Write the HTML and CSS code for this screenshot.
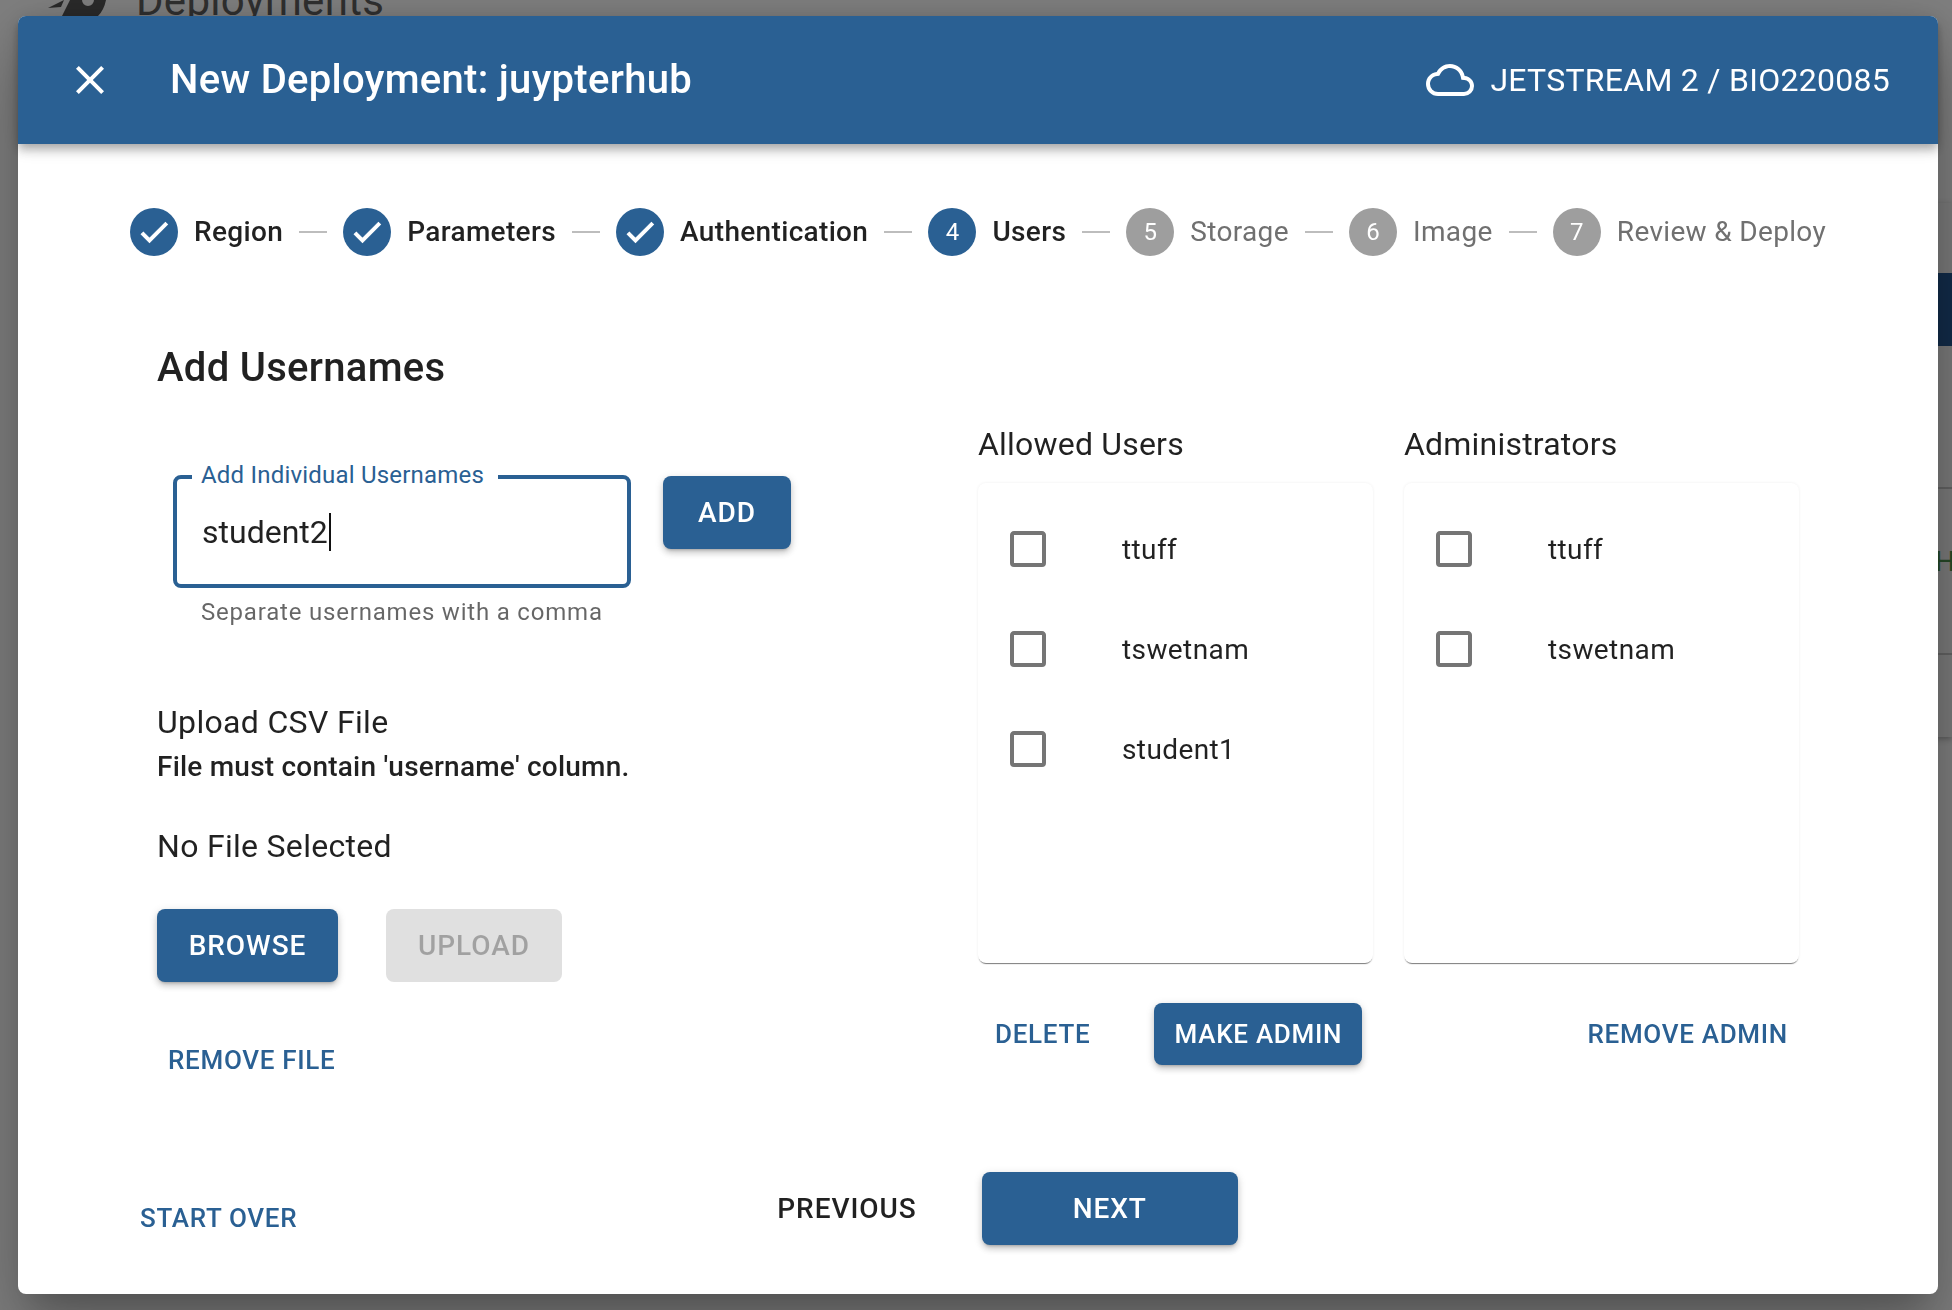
FILE: index.html
```html
<!DOCTYPE html>
<html lang="en">
<head>
    <meta charset="UTF-8">
    <meta name="viewport" content="width=device-width, initial-scale=1.0">
    <title>New Deployment</title>
    <link rel="stylesheet" href="styles.css">
</head>
<body>
    <div class="backdrop">
        <svg class="page-logo" viewBox="0 0 60 16"><path d="M0 8 16 0 13 7Z M14 16 22 0H34A6 6 0 0 0 46 0H58Q56 10 50 16Z"/></svg>
        <div class="page-title">Deployments</div>
        <div class="page-panel">
            <div class="panel-head"></div>
            <div class="panel-line panel-line-a"></div>
            <div class="panel-letter">H</div>
            <div class="panel-line panel-line-b"></div>
        </div>
    </div>

    <div class="dialog">
        <header class="toolbar">
            <svg class="close-icon" viewBox="0 0 24 24"><path d="M19 6.41 17.59 5 12 10.59 6.41 5 5 6.41 10.59 12 5 17.59 6.41 19 12 13.41 17.59 19 19 17.59 13.41 12z"/></svg>
            <div class="toolbar-title">New Deployment: juypterhub</div>
            <div class="toolbar-cloud">
                <svg class="cloud-icon" viewBox="0 0 24 24"><path d="M19.35 10.03C18.67 6.59 15.64 4 12 4 9.11 4 6.6 5.64 5.35 8.03 2.34 8.36 0 10.9 0 14A6 6 0 0 0 6 20H19A5 5 0 0 0 24 15C24 12.36 21.95 10.22 19.35 10.03M19 18H6A4 4 0 0 1 2 14C2 11.95 3.53 10.24 5.56 10.03L6.63 9.92 7.13 8.97C8.08 7.14 9.94 6 12 6 14.62 6 16.88 7.86 17.39 10.43L17.69 11.93 19.22 12.04C20.78 12.14 22 13.45 22 15A3 3 0 0 1 19 18Z"/></svg>
                <span>JETSTREAM 2 / BIO220085</span>
            </div>
        </header>

        <nav class="stepper">
            <div class="step">
                <span class="step-badge"><svg viewBox="0 0 24 24"><path d="M21 7 9 19 3.5 13.5 4.91 12.09 9 16.17 19.59 5.59 21 7Z"/></svg></span>
                <span class="step-label">Region</span>
            </div>
            <div class="step-line"></div>
            <div class="step">
                <span class="step-badge"><svg viewBox="0 0 24 24"><path d="M21 7 9 19 3.5 13.5 4.91 12.09 9 16.17 19.59 5.59 21 7Z"/></svg></span>
                <span class="step-label">Parameters</span>
            </div>
            <div class="step-line"></div>
            <div class="step">
                <span class="step-badge"><svg viewBox="0 0 24 24"><path d="M21 7 9 19 3.5 13.5 4.91 12.09 9 16.17 19.59 5.59 21 7Z"/></svg></span>
                <span class="step-label">Authentication</span>
            </div>
            <div class="step-line"></div>
            <div class="step">
                <span class="step-badge">4</span>
                <span class="step-label">Users</span>
            </div>
            <div class="step-line"></div>
            <div class="step step-todo">
                <span class="step-badge">5</span>
                <span class="step-label">Storage</span>
            </div>
            <div class="step-line"></div>
            <div class="step step-todo">
                <span class="step-badge">6</span>
                <span class="step-label">Image</span>
            </div>
            <div class="step-line"></div>
            <div class="step step-todo">
                <span class="step-badge">7</span>
                <span class="step-label">Review &amp; Deploy</span>
            </div>
        </nav>

        <main class="content">
            <section class="left-col">
                <h2 class="section-title">Add Usernames</h2>

                <div class="add-row">
                    <div class="field">
                        <div class="field-box">
                            <span class="field-label">Add Individual Usernames</span>
                            <span class="field-value">student2</span><span class="caret"></span>
                        </div>
                        <div class="field-hint">Separate usernames with a comma</div>
                    </div>
                    <button type="button" class="btn btn-add">ADD</button>
                </div>

                <div class="upload-title">Upload CSV File</div>
                <div class="upload-note">File must contain 'username' column.</div>
                <div class="upload-file">No File Selected</div>

                <div class="upload-btns">
                    <button type="button" class="btn btn-browse">BROWSE</button>
                    <button type="button" class="btn btn-disabled">UPLOAD</button>
                </div>
                <button type="button" class="btn-text btn-small btn-remove-file">REMOVE FILE</button>
            </section>

            <section class="right-col">
                <div class="list-col">
                    <div class="list-title">Allowed Users</div>
                    <div class="list-card">
                        <div class="list-row">
                            <svg class="check" viewBox="0 0 24 24"><path d="M19 3H5C3.89 3 3 3.89 3 5V19A2 2 0 0 0 5 21H19A2 2 0 0 0 21 19V5C21 3.89 20.1 3 19 3M19 5V19H5V5H19Z"/></svg>
                            <span>ttuff</span>
                        </div>
                        <div class="list-row">
                            <svg class="check" viewBox="0 0 24 24"><path d="M19 3H5C3.89 3 3 3.89 3 5V19A2 2 0 0 0 5 21H19A2 2 0 0 0 21 19V5C21 3.89 20.1 3 19 3M19 5V19H5V5H19Z"/></svg>
                            <span>tswetnam</span>
                        </div>
                        <div class="list-row">
                            <svg class="check" viewBox="0 0 24 24"><path d="M19 3H5C3.89 3 3 3.89 3 5V19A2 2 0 0 0 5 21H19A2 2 0 0 0 21 19V5C21 3.89 20.1 3 19 3M19 5V19H5V5H19Z"/></svg>
                            <span>student1</span>
                        </div>
                    </div>
                    <div class="list-actions">
                        <button type="button" class="btn-text btn-small btn-delete">DELETE</button>
                        <button type="button" class="btn btn-small btn-make">MAKE ADMIN</button>
                    </div>
                </div>
                <div class="list-col">
                    <div class="list-title">Administrators</div>
                    <div class="list-card">
                        <div class="list-row">
                            <svg class="check" viewBox="0 0 24 24"><path d="M19 3H5C3.89 3 3 3.89 3 5V19A2 2 0 0 0 5 21H19A2 2 0 0 0 21 19V5C21 3.89 20.1 3 19 3M19 5V19H5V5H19Z"/></svg>
                            <span>ttuff</span>
                        </div>
                        <div class="list-row">
                            <svg class="check" viewBox="0 0 24 24"><path d="M19 3H5C3.89 3 3 3.89 3 5V19A2 2 0 0 0 5 21H19A2 2 0 0 0 21 19V5C21 3.89 20.1 3 19 3M19 5V19H5V5H19Z"/></svg>
                            <span>tswetnam</span>
                        </div>
                    </div>
                    <div class="list-actions list-actions-end">
                        <button type="button" class="btn-text btn-small btn-remove-admin">REMOVE ADMIN</button>
                    </div>
                </div>
            </section>
        </main>

        <footer class="footer">
            <button type="button" class="btn-text btn-small btn-start">START OVER</button>
            <button type="button" class="btn-text btn-previous">PREVIOUS</button>
            <button type="button" class="btn btn-next">NEXT</button>
        </footer>
    </div>
</body>
</html>
```

FILE: styles.css
```css
* {
    box-sizing: border-box;
}

html,
body {
    height: 100%;
}

body {
    margin: 0;
    padding: 16px 14px 16px 18px;
    overflow: hidden;
    background: #808080;
    color: rgba(0, 0, 0, 0.87);
    font-family: Roboto, sans-serif;
}

/* page behind the dialog */
.backdrop {
    position: fixed;
    inset: 0;
    overflow: hidden;
    background: #808080;
}

.page-logo {
    position: absolute;
    top: 0;
    left: 48px;
    width: 60px;
    height: 16px;
    fill: #2a2a2a;
}

.page-title {
    position: absolute;
    top: -23px;
    left: 136px;
    font-size: 42px;
    line-height: 48px;
    letter-spacing: 0.3px;
    color: #303030;
}

.page-panel {
    position: absolute;
    top: 203px;
    right: 0;
    width: 40px;
    height: 534px;
    background: #7c7c7c;
    box-shadow: 0 2px 6px rgba(0, 0, 0, 0.3);
}

.panel-head {
    position: absolute;
    top: 70px;
    left: 0;
    width: 100%;
    height: 73px;
    background: #122c4a;
}

.panel-line {
    position: absolute;
    left: 0;
    width: 100%;
    height: 2px;
    background: #646464;
}

.panel-line-a {
    top: 284px;
}

.panel-line-b {
    top: 450px;
}

.panel-letter {
    position: absolute;
    top: 343px;
    left: 23px;
    font-size: 28px;
    line-height: 32px;
    color: #274a27;
}

/* dialog */
.dialog {
    position: relative;
    width: 1920px;
    height: 1278px;
    background: #fff;
    border-radius: 8px;
    box-shadow: 0 22px 30px -14px rgba(0, 0, 0, 0.2), 0 48px 76px 6px rgba(0, 0, 0, 0.16), 0 18px 92px 16px rgba(0, 0, 0, 0.12);
}

.toolbar {
    display: flex;
    align-items: center;
    height: 128px;
    padding: 0 48px 0 48px;
    border-radius: 8px 8px 0 0;
    background: #2a6093;
    color: #fff;
    box-shadow: 0 4px 8px -2px rgba(0, 0, 0, 0.2), 0 8px 10px 0 rgba(0, 0, 0, 0.14), 0 2px 20px 0 rgba(0, 0, 0, 0.12);
}

.close-icon {
    width: 48px;
    height: 48px;
    fill: #fff;
}

.toolbar-title {
    margin-left: 56px;
    padding-bottom: 2px;
    font-size: 40px;
    font-weight: 500;
    letter-spacing: 0.3px;
}

.toolbar-cloud {
    display: flex;
    align-items: center;
    gap: 16px;
    margin-left: auto;
    font-size: 32px;
    letter-spacing: 0.27px;
}

.cloud-icon {
    width: 48px;
    height: 48px;
    fill: #fff;
}

/* stepper */
.stepper {
    display: flex;
    align-items: center;
    padding: 64px 112px 0;
}

.step {
    display: flex;
    align-items: center;
    gap: 16px;
}

.step-badge {
    display: flex;
    align-items: center;
    justify-content: center;
    width: 48px;
    height: 48px;
    border-radius: 50%;
    background: #2a6093;
    color: #fff;
    font-size: 24px;
}

.step-badge svg {
    width: 36px;
    height: 36px;
    fill: #fff;
    stroke: #fff;
    stroke-width: 0.7;
}

.step-label {
    padding-bottom: 2px;
    font-size: 28px;
    font-weight: 500;
    letter-spacing: 0.33px;
}

.step-todo .step-badge {
    background: #9e9e9e;
}

.step-todo .step-label {
    color: #707070;
    font-weight: 400;
}

.step-line {
    flex: 1;
    height: 2px;
    margin: 0 16px;
    background: #bdbdbd;
}

/* main form */
.content {
    display: flex;
    padding: 0 0 0 139px;
}

.left-col {
    flex: none;
    width: 821px;
}

.section-title {
    margin: 88px 0 0;
    font-size: 40px;
    line-height: 48px;
    font-weight: 500;
    letter-spacing: 0.3px;
}

.add-row {
    display: flex;
    align-items: flex-start;
    gap: 32px;
    margin-top: 83px;
    padding-left: 16px;
}

.field {
    width: 458px;
}

.field-box {
    position: relative;
    display: flex;
    align-items: center;
    height: 113px;
    padding: 0 25px 0 25px;
    border: 4px solid #2a6093;
    border-radius: 8px;
    font-size: 32px;
}

.field-label {
    position: absolute;
    top: -20px;
    left: 15px;
    padding: 0 14px 0 9px;
    background: #fff;
    color: #2a6093;
    font-size: 24px;
    line-height: 32px;
    letter-spacing: 0.2px;
}

.caret {
    width: 2px;
    height: 38px;
    margin-left: 1px;
    background: #111;
}

.field-hint {
    margin-top: 8px;
    padding-left: 28px;
    color: rgba(0, 0, 0, 0.6);
    font-size: 24px;
    line-height: 32px;
    letter-spacing: 0.8px;
}

.btn,
.btn-text {
    display: flex;
    align-items: center;
    justify-content: center;
    padding: 0;
    border: none;
    border-radius: 8px;
    font-family: Roboto, sans-serif;
    font-size: 28px;
    font-weight: 500;
    letter-spacing: 0.95px;
    cursor: pointer;
}

.btn {
    height: 73px;
    background: #2a6093;
    color: #fff;
    box-shadow: 0 3px 3px -2px rgba(0, 0, 0, 0.2), 0 4px 6px 0 rgba(0, 0, 0, 0.14), 0 2px 10px 0 rgba(0, 0, 0, 0.12);
}

.btn-text {
    background: none;
    color: #2a6093;
}

.btn-small {
    font-size: 26px;
    letter-spacing: 0.7px;
}

.btn-add {
    width: 128px;
    margin-top: 1px;
}

.upload-title {
    margin-top: 72px;
    font-size: 32px;
    line-height: 44px;
    letter-spacing: 0.33px;
}

.upload-note {
    margin-top: 3px;
    font-size: 28px;
    line-height: 40px;
    font-weight: 500;
    letter-spacing: 0.22px;
}

.upload-file {
    margin-top: 37px;
    font-size: 32px;
    line-height: 44px;
    letter-spacing: 0.3px;
}

.upload-btns {
    display: flex;
    gap: 48px;
    margin-top: 41px;
}

.btn-browse {
    width: 181px;
}

.btn-disabled {
    width: 176px;
    background: #e0e0e0;
    color: rgba(0, 0, 0, 0.28);
    box-shadow: none;
}

.btn-remove-file {
    margin: 60px 0 0 11px;
    line-height: 36px;
}

/* user lists */
.right-col {
    display: flex;
    flex: none;
    gap: 31px;
}

.list-col {
    width: 395px;
}

.list-title {
    margin-top: 166px;
    font-size: 32px;
    line-height: 44px;
    letter-spacing: 0.2px;
}

.list-card {
    height: 480px;
    margin-top: 17px;
    padding-top: 16px;
    border-radius: 8px;
    box-shadow: 0 2px 1px -1px rgba(0, 0, 0, 0.5), 0 0 3px 0 rgba(0, 0, 0, 0.07);
}

.list-row {
    display: flex;
    align-items: center;
    gap: 70px;
    height: 100px;
    padding-left: 26px;
    font-size: 28px;
    letter-spacing: 0.4px;
}

.check {
    flex: none;
    width: 48px;
    height: 48px;
    fill: #757575;
}

.list-actions {
    display: flex;
    align-items: center;
    margin-top: 40px;
}

.list-actions-end {
    justify-content: flex-end;
    padding-right: 11px;
}

.btn-delete {
    margin-left: 17px;
}

.btn-make {
    width: 208px;
    height: 62px;
    margin-left: 64px;
}

.btn-remove-admin {
    height: 62px;
}

/* bottom buttons */
.footer {
    position: absolute;
    left: 0;
    bottom: 49px;
    display: flex;
    align-items: flex-start;
    width: 100%;
    padding-left: 122px;
}

.btn-start {
    margin-top: 28px;
    height: 36px;
}

.btn-previous {
    height: 73px;
    margin-left: 480px;
    color: rgba(0, 0, 0, 0.87);
}

.btn-next {
    width: 256px;
    margin-left: 65px;
}
```
